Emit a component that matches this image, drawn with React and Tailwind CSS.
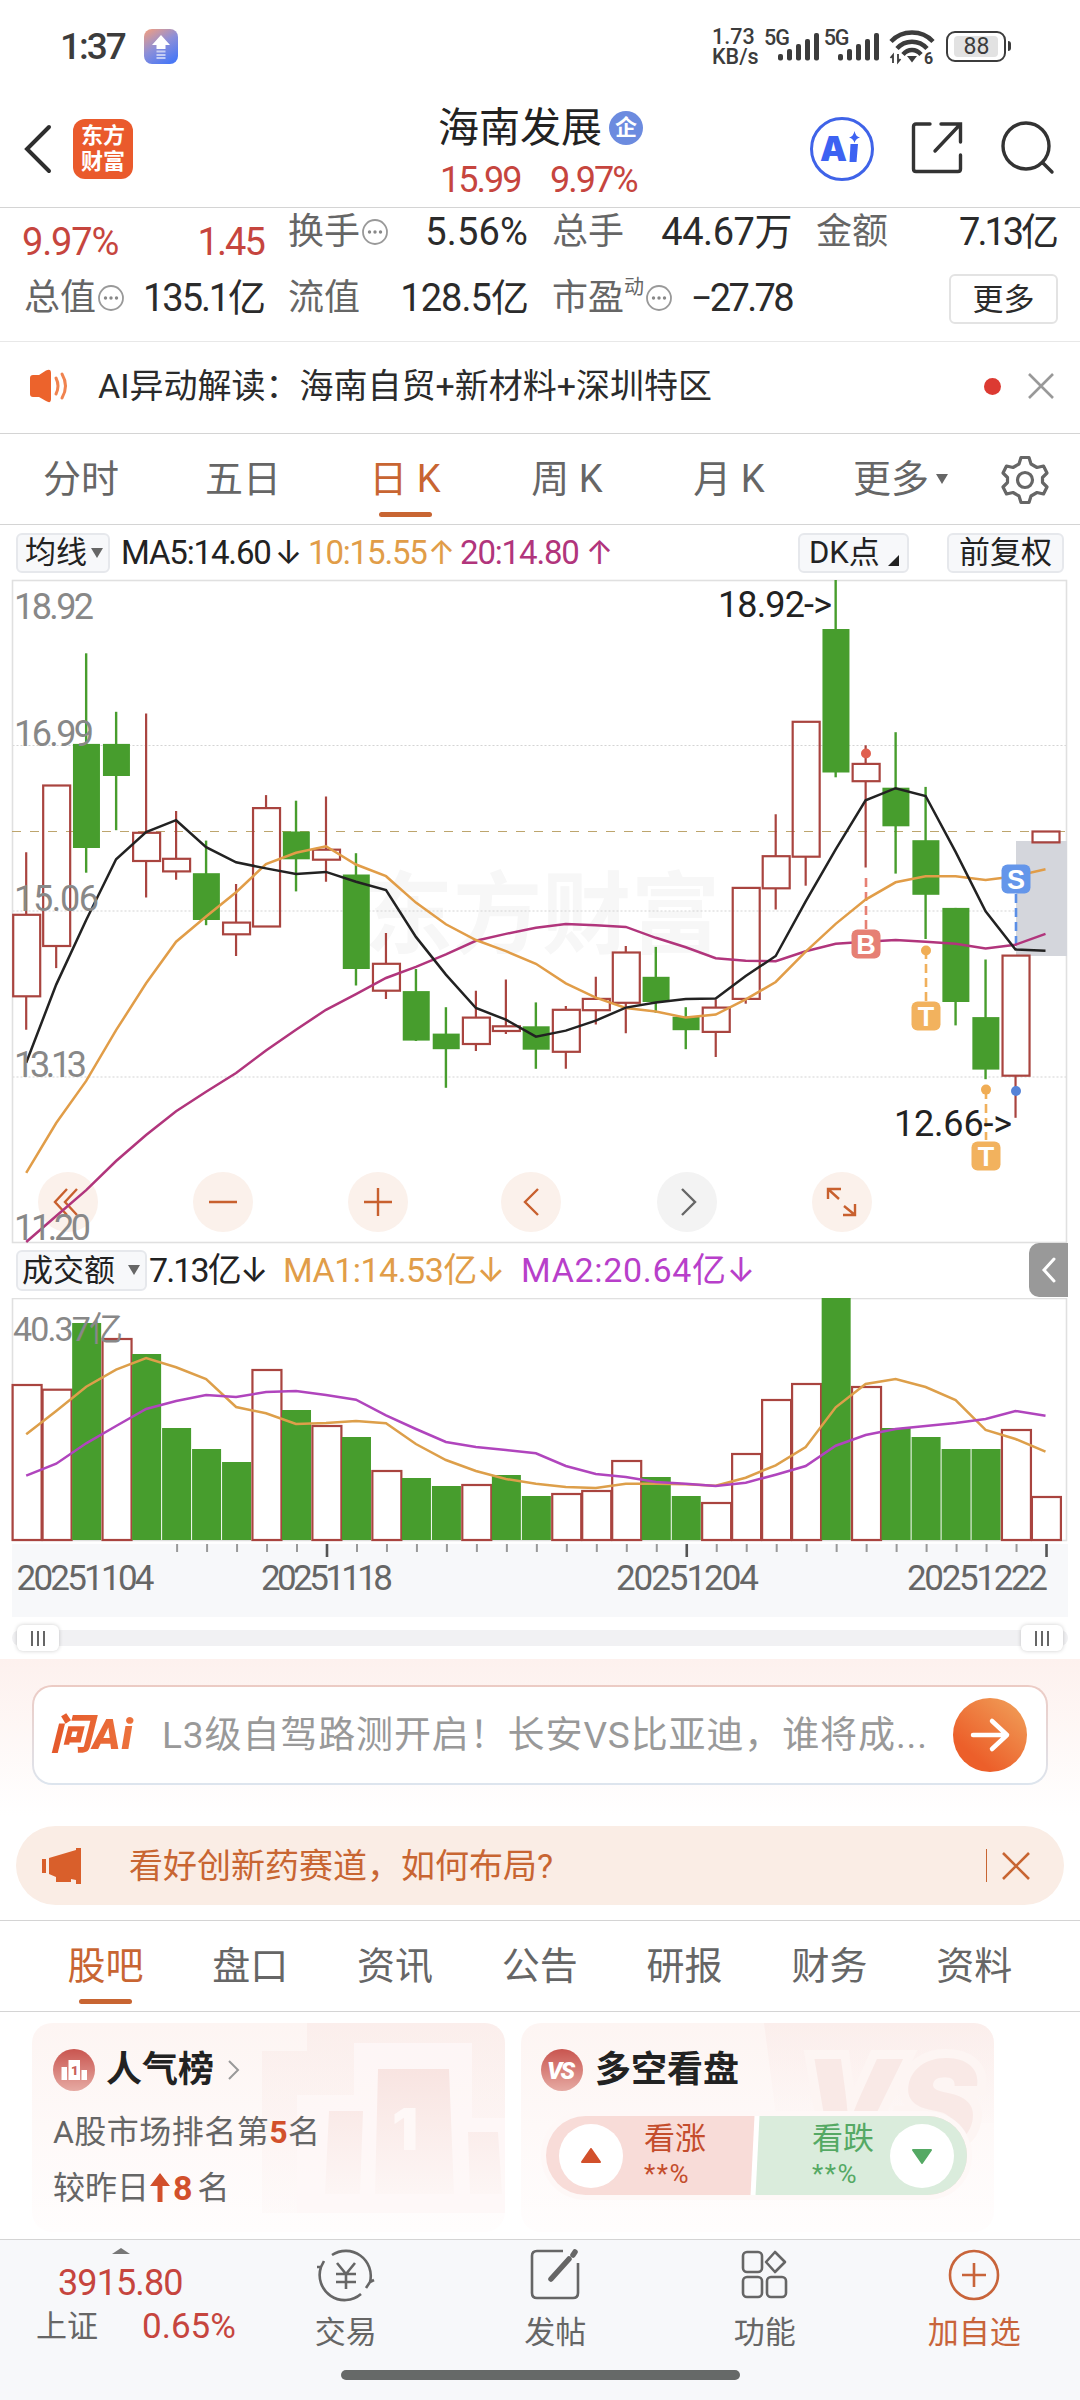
import React from "react";

const RED = "#a9443f";
const GREEN = "#479d2d";
const FONT = '"Roboto","Inter","Noto Sans CJK SC",sans-serif';

// up?, high, body top, body bottom, low
const candles = [
  [1, 272.3, 334.8, 416.3, 449.7], [1, 205.5, 205.5, 366, 388.1], [0, 73.3, 163.9, 268, 292.7],
  [0, 131.8, 163.9, 196, 250.2], [1, 133.6, 252.8, 281, 317.4], [1, 231.1, 278.8, 291.4, 299.7],
  [0, 260.6, 293.2, 340, 345.2], [1, 304, 342.6, 354.3, 376], [1, 215.1, 228.1, 346.5, 346.5],
  [0, 220.7, 251.5, 279.3, 311.4], [1, 216.4, 269.7, 279.7, 301.8], [0, 273.2, 294.5, 389, 405.5],
  [1, 353, 383.8, 410.7, 418.9], [0, 389, 411.1, 460.6, 461], [0, 427.2, 453.6, 469.2, 507.8],
  [1, 410.7, 437.6, 464, 471], [1, 399.4, 446.3, 451, 454], [0, 422.4, 446.3, 469.7, 488.8],
  [1, 425.9, 429.8, 471.8, 488.8], [1, 396.8, 418.9, 430.2, 444.5], [1, 366, 372.5, 422.8, 453.2],
  [0, 366.9, 396.8, 422, 432.8], [0, 427.2, 436.7, 450.2, 469.2], [1, 419.4, 427.6, 451.9, 477],
  [1, 307.9, 307.9, 418.9, 423.7], [1, 234.2, 276.2, 308.3, 329.6], [1, 141.8, 141.8, 276.7, 305.7],
  [0, 0, 49, 192.5, 197.3], [1, 165.2, 183.9, 201.2, 287.5], [0, 152.2, 207.7, 246.3, 293.6],
  [0, 206.9, 260.2, 314.8, 359], [0, 327.9, 327.9, 422, 445.4], [0, 379.5, 437.1, 489.6, 499.2],
  [1, 375.6, 375.6, 495.7, 537.8], [1, 251.5, 251.5, 262.4, 262.4],
];
const ma5 = [482.7, 404.6, 340, 279.3, 252, 240.2, 267.1, 282.3, 288.4, 294, 291.9, 301.8, 310.1, 356.9, 394.6, 428, 439.7, 456.7, 450.6, 440.6, 427.6, 422.4, 418.9, 418.5, 396, 376, 321.3, 269.3, 220.3, 208.2, 216, 271.9, 331.3, 369.5, 370.8];
const ma10 = [592.8, 543, 500.9, 450.2, 403.3, 361.7, 336.5, 312.2, 284, 272.8, 266.3, 284.5, 296.2, 322.6, 344.3, 360, 371.2, 383.8, 403.3, 417.6, 428, 431.5, 437.6, 434.5, 419.4, 402, 371.7, 343.9, 319.6, 302.3, 296.2, 296.2, 300.1, 296.2, 289.3];
const ma20 = [662, 636, 610.2, 581, 555, 531.3, 511.7, 493, 470.5, 449.7, 429.8, 414.2, 398, 386.8, 374.3, 360.8, 353.9, 347.8, 343.9, 345.2, 346.9, 357.8, 367.3, 378.2, 380.8, 381.2, 371.2, 363.8, 361.7, 360, 361.7, 363.8, 368.6, 364.7, 353.9];
const volumes = [87, 91.7, 25, 41, 56, 130, 151, 164, 72, 112, 128, 139, 173, 180, 188, 187, 177, 198, 196, 193, 163, 179, 198, 205, 156, 102, 86, 0, 89, 130, 139, 151, 151, 132, 199];
const volumeUp = [0, 1, 3, 8, 10, 12, 15, 18, 19, 20, 23, 24, 25, 26, 28, 33, 34];
const vma1 = [136.3, 113, 88.7, 71.7, 60, 69.3, 81, 109, 115.3, 126, 125, 123, 125.3, 146, 162, 173, 181, 185.7, 189, 190, 185.7, 185.7, 186.3, 187.7, 179.7, 167.3, 149, 109.3, 86, 81, 89, 102, 132, 141, 153.7];
const vma2 = [177.7, 165.7, 145.3, 128, 111, 103, 97, 99, 94, 93, 97, 101.7, 117.3, 131, 144, 149, 152, 155.3, 168, 176, 179, 184, 185.7, 188, 184.7, 176.7, 168, 147.7, 137, 131, 128, 125, 121, 113, 117.7];

const cx = (i) => 26.2 + i * 29.98;
const line = (a) => a.map((y, i) => `${cx(i).toFixed(1)},${y}`).join(" ");

function Badge({ x, y, fill, children }) {
  return (
    <g>
      <rect x={x - 14.5} y={y - 14.5} width="29" height="29" rx="6" fill={fill} />
      <text x={x} y={y + 9.5} textAnchor="middle" fontSize="27" fontWeight="700" fill="#fff" fontFamily='"Liberation Sans",sans-serif'>{children}</text>
    </g>
  );
}

function Candles() {
  return (
    <svg width="1080" height="663" viewBox="0 0 1080 663" className="block overflow-visible" fontFamily={FONT}>
      <text x="364" y="366" fontSize="89" fontWeight="700" fill="#f7f7f7" textLength="356">东方财富</text>
      <g stroke="#d4d4d4" strokeWidth="1.2" strokeDasharray="2 2">
        <path d="M12.5 165.5H1067M12.5 331H1067M12.5 497H1067" />
      </g>
      <rect x="12.5" y="0.5" width="1054" height="662" fill="none" stroke="#e0e0e0" strokeWidth="1.6" />
      <rect x="1016" y="261" width="51" height="115" fill="#d4d6dc" />
      <path d="M12 251.5H1067" stroke="#bda56d" strokeWidth="1.2" strokeDasharray="9 9" />
      {[68, 223, 378, 531, 687, 842].map((x) => (
        <circle key={x} cx={x} cy="622" r="30" fill={x === 687 ? "#f3f3f3" : "#fbf1eb"} />
      ))}
      <g fill="none" stroke="#c8602e" strokeWidth="2.4">
        <path d="M67 609L55 622L67 635M77 609L65 622L77 635M209 622H237M364 622H392M378 608V636M538 609L525 622L538 635" />
        <path d="M839 619L828 609M828 619V609H841M844 626L855 635M855 624V635H843" />
        <path d="M682 609L695 622L682 635" stroke="#666" />
      </g>
      {candles.map(([up, h, t, b, l], i) => {
        const x = cx(i);
        return up ? (
          <g key={i} stroke={RED} strokeWidth="2.2" fill="none">
            <path d={`M${x} ${h}V${t}M${x} ${b}V${l}`} />
            <rect x={x - 13} y={t} width="27" height={b - t} />
          </g>
        ) : (
          <g key={i} fill={GREEN}>
            <path d={`M${x} ${h}V${l}`} stroke={GREEN} strokeWidth="2.4" />
            <rect x={x - 13.2} y={t} width="27" height={b - t} />
          </g>
        );
      })}
      <g strokeWidth="2.6" strokeDasharray="9 5" fill="none">
        <path d="M866 298V350" stroke="#e68074" />
        <path d="M926 370V421M986 510V560" stroke="#f0b05c" />
        <path d="M1016 314V368" stroke="#5b8fe6" />
      </g>
      <circle cx="866" cy="173.5" r="5" fill="#e0604f" />
      <circle cx="926" cy="370.5" r="5" fill="#f0ad55" />
      <circle cx="986" cy="509.6" r="5" fill="#f0ad55" />
      <circle cx="1016" cy="511" r="5" fill="#5583d8" />
      <polyline points={line(ma20)} fill="none" stroke="#b1357c" strokeWidth="2.5" />
      <polyline points={line(ma10)} fill="none" stroke="#e19d48" strokeWidth="2.5" />
      <polyline points={line(ma5)} fill="none" stroke="#222" strokeWidth="2.5" />
      <Badge x={866} y={364} fill="#e68074">B</Badge>
      <Badge x={926} y={436} fill="#f2b25e">T</Badge>
      <Badge x={986} y={576} fill="#f2b25e">T</Badge>
      <Badge x={1016} y={299} fill="#6496ea">S</Badge>
      <g fontSize="36" fill="#888">
        <text x="14" y="38.5" textLength="80">18.92</text>
        <text x="14" y="165.5" textLength="80">16.99</text>
        <text x="14" y="331" textLength="85">15.06</text>
        <text x="14" y="497" textLength="73">13.13</text>
        <text x="14" y="660" textLength="77">11.20</text>
      </g>
      <g fontSize="36" fill="#222">
        <text x="718" y="36.5" textLength="114">18.92-&gt;</text>
        <text x="894" y="556" textLength="118">12.66-&gt;</text>
      </g>
    </svg>
  );
}

function Volume() {
  return (
    <svg width="1080" height="320" viewBox="0 0 1080 320" className="block" fontFamily={FONT}>
      <rect x="12.5" y="0.5" width="1054" height="242" fill="none" stroke="#e0e0e0" strokeWidth="1.6" />
      <rect x="12" y="246" width="1056" height="73" fill="#f7f8fa" />
      {volumes.map((t, i) => {
        const x = 12.6 + i * 29.98;
        return volumeUp.includes(i) ? (
          <rect key={i} x={x} y={t} width="29" height={242 - t} fill="none" stroke={RED} strokeWidth="2.2" />
        ) : (
          <rect key={i} x={x - 0.4} y={t} width="29" height={242 - t} fill={GREEN} />
        );
      })}
      <polyline points={line(vma1)} fill="none" stroke="#dd9f4a" strokeWidth="2.5" />
      <polyline points={line(vma2)} fill="none" stroke="#b045bd" strokeWidth="2.5" />
      {volumes.map((_, i) => {
        if (i < 5) return null;
        const major = i === 10 || i === 22 || i === 34;
        return <path key={i} d={`M${cx(i) + 1} 246V${major ? 259 : 254}`} stroke={major ? "#555" : "#999"} strokeWidth={major ? 2.6 : 2} />;
      })}
      <text x="13" y="43" fontSize="34" fill="#888" textLength="110">40.37亿</text>
      <g fontSize="35" fill="#666">
        <text x="16.5" y="292" textLength="138">20251104</text>
        <text x="261" y="292" textLength="132">20251118</text>
        <text x="616" y="292" textLength="143">20251204</text>
        <text x="907" y="292" textLength="141">20251222</text>
      </g>
    </svg>
  );
}

const Dots = () => (
  <svg width="28" height="28" viewBox="0 0 28 28" className="ml-px shrink-0">
    <circle cx="14" cy="14" r="12" fill="none" stroke="#999" strokeWidth="1.8" />
    <g fill="#888"><circle cx="8.5" cy="14" r="1.7" /><circle cx="14" cy="14" r="1.7" /><circle cx="19.5" cy="14" r="1.7" /></g>
  </svg>
);

function Stat({ label, dots, value, track }) {
  return (
    <div className="flex h-[40px] items-center justify-between text-[38px] text-[#2b2b2b]">
      <span className="flex items-center">
        <span className="text-[36px] text-[#666]">{label}</span>
        {dots && <Dots />}
      </span>
      <span className={track}>{value}</span>
    </div>
  );
}

const Signal = () => (
  <svg width="42" height="28" viewBox="0 0 42 28" className="self-end" fill="#3c3c3c">
    <rect x="0" y="21" width="5" height="6.5" rx="2" /><rect x="9" y="16" width="5" height="11.5" rx="2" />
    <rect x="18" y="11" width="5" height="16.5" rx="2" /><rect x="27" y="6" width="5" height="21.5" rx="2" />
    <rect x="36" y="0" width="5" height="27.5" rx="2" />
  </svg>
);

function StatusBar() {
  return (
    <div className="flex h-[92px] shrink-0 items-start pt-[28px] pl-[60px] text-[#3c3c3c]">
      <span className="w-[84px] text-[37px] leading-[38px] font-medium tracking-[-0.055em]">1:37</span>
      <svg width="34" height="36" viewBox="0 0 34 36" className="mt-px">
        <defs><linearGradient id="app" x1="0.1" y1="0" x2="0.7" y2="1"><stop offset="0" stopColor="#ee9d83" /><stop offset="0.5" stopColor="#8d8fd8" /><stop offset="1" stopColor="#4a78f5" /></linearGradient></defs>
        <rect width="34" height="35" rx="8" fill="url(#app)" />
        <path d="M17 6L26 16H21.5V20H12.5V16H8Z" fill="#fff" /><path d="M12.5 22.5H21.5M12.5 26H21.5M12.5 29H21.5" stroke="#fff" strokeWidth="1.8" opacity="0.6" />
      </svg>
      <div className="ml-[534px] flex h-[37px] w-[52px] flex-col justify-between text-[21.5px] leading-[17px] font-medium">
        <span>1.73</span><span>KB/s</span>
      </div>
      <div className="flex h-[33px]">
        <span className="-mr-[11px] pt-px text-[21.5px] leading-[18px] font-medium tracking-[-0.05em]">5G</span><Signal />
      </div>
      <div className="ml-[4px] flex h-[33px]">
        <span className="-mr-[10px] pt-px text-[21.5px] leading-[18px] font-medium tracking-[-0.05em]">5G</span><Signal />
      </div>
      <svg width="46" height="38" viewBox="0 0 46 38" className="ml-[9px]">
        <g fill="none" stroke="#3c3c3c" strokeWidth="4.4"><path d="M2 13.5C13 1.500 33 1.500 44 13.500" /><path d="M8 20.500C16 11.500 30 11.500 38 20.500" /><path d="M14 26.500C19 20.500 27 20.500 32 26.500" /></g>
        <path d="M18 28H28L23 34.500Z" fill="#3c3c3c" />
        <path d="M4 35V27L1.500 30M9 26V34L11.500 31" fill="none" stroke="#3c3c3c" strokeWidth="1.8" />
        <text x="35" y="35.500" fontSize="16" fontWeight="700" fill="#3c3c3c">6</text>
      </svg>
      <div className="mt-[3px] ml-[11px] flex h-[31px] w-[60px] items-center justify-center rounded-[9px] border-[2.500px] border-[#3c3c3c] p-[3px]">
        <span className="flex h-full w-[44px] items-center justify-center rounded-[4px] bg-[#e2e2e2] text-[23px]">88</span>
      </div>
      <span className="mt-[13px] ml-[2px] h-[10px] w-[3px] rounded-r bg-[#3c3c3c]" />
    </div>
  );
}

function Header() {
  return (
    <div className="flex h-[116px] shrink-0 items-center border-b border-[#d4d4d4] pb-[3px]">
      <svg width="30" height="52" viewBox="0 0 30 52" className="mt-[2px] ml-[23px]"><path d="M26 4L4 26L26 48" fill="none" stroke="#2e2e2e" strokeWidth="4" strokeLinecap="round" /></svg>
      <div className="mt-[2px] ml-[20px] flex h-[60px] w-[60px] flex-col items-center justify-center rounded-[12px] bg-[#ea5a2c] text-[22px] leading-[26px] font-bold text-white">
        <span>东方</span><span>财富</span>
      </div>
      <div className="mt-[10px] ml-[305px] flex w-[251px] flex-col">
        <div className="flex h-[44px] items-center text-[41px] leading-[44px] text-[#222]">
          海南发展
          <span className="ml-[7px] flex h-[34px] w-[34px] items-center justify-center rounded-full bg-[#6c8bdf] text-[22px] leading-none font-bold text-white">企</span>
        </div>
        <div className="mt-[10px] flex h-[40px] items-center text-[36px] tracking-[-0.055em] text-[#c6453e]">
          <span className="w-[112px] pl-[2px]">15.99</span><span>9.97%</span>
        </div>
      </div>
      <svg width="66" height="66" viewBox="0 0 66 66" className="mt-[2px] ml-[120px]">
        <circle cx="33" cy="33" r="30.500" fill="none" stroke="#3f63e8" strokeWidth="3" />
        <text x="11" y="45" fontSize="34" fontWeight="900" fill="#3d62f2" fontFamily="Inter" textLength="26">A</text>
        <path d="M41.500 28H49L47.500 46H40.500Z" fill="#3d62f2" /><path d="M45.500 15Q46.500 20.500 51 21.500Q46.500 22.500 45.500 27Q44.500 22.500 40 21.500Q44.500 20.500 45.500 15Z" fill="#3d62f2" />
      </svg>
      <svg width="54" height="56" viewBox="0 0 54 56" className="ml-[36px]" fill="none" stroke="#333" strokeWidth="3.400" strokeLinecap="round">
        <path d="M19 4H5Q2.500 4 2.500 6.500V49Q2.500 51.500 5 51.500H47Q49.500 51.500 49.500 49V35M30 4H49.500V22M49.500 4L24 31" />
      </svg>
      <svg width="54" height="56" viewBox="0 0 54 56" className="ml-[36px]" fill="none" stroke="#333" strokeWidth="3.400" strokeLinecap="round">
        <circle cx="25" cy="26" r="23" /><path d="M42 43L51 52" />
      </svg>
    </div>
  );
}

const Caret = () => <span className="h-0 w-0 border-x-[6px] border-t-[10px] border-x-transparent border-t-[#666]" />;

function Tabs({ items, active, width }) {
  return items.map((t, i) => (
    <div key={t} className={"flex flex-col items-center " + width + (i === active ? " text-[#c86532]" : " text-[#666]")}>
      <span className="text-[38px] leading-[44px] tracking-normal whitespace-pre">{t}</span>
      <span className={"mt-[11px] h-[5px] w-[53px] rounded-full " + (i === active ? "bg-[#c86532]" : "")} />
    </div>
  ));
}

function NavItem({ label, accent, children }) {
  return (
    <div className={"flex w-[209.5px] flex-col items-center pt-[7px] " + (accent ? "text-[#c8643a]" : "text-[#666]")}>
      <svg width="60" height="56" viewBox="0 0 60 56" fill="none" stroke="currentColor" strokeWidth="2.600">{children}</svg>
      <span className="mt-[12px] text-[31px] leading-[36px]">{label}</span>
    </div>
  );
}

export default function App() {
  return (
    <div className="flex h-[2400px] w-[1080px] flex-col overflow-hidden bg-white leading-none" style={{ fontFamily: FONT }}>
      <StatusBar />
      <Header />

      <div className="grid h-[134px] shrink-0 grid-cols-4 content-start gap-x-6 gap-y-[26px] border-b border-[#e8e8e8] px-6 pt-[4px]">
        <div className="flex h-[40px] translate-y-[10px] items-center justify-between text-[38px] text-[#c6453e]"><span className="-ml-[2px] tracking-[-0.03em]">9.97%</span><span className="tracking-[-0.05em]">1.45</span></div>
        <Stat label="换手" dots value="5.56%" track="tracking-[0.005em]" />
        <Stat label="总手" value="44.67万" track="tracking-[-0.012em]" />
        <Stat label="金额" value="7.13亿" track="tracking-[-0.08em]" />
        <Stat label="总值" dots value="135.1亿" track="tracking-[-0.055em]" />
        <Stat label="流值" value="128.5亿" track="tracking-[-0.025em]" />
        <Stat label={<>市盈<sup className="relative -top-[16px] align-baseline text-[20px]">动</sup></>} dots value="−27.78" track="tracking-[-0.07em]" />
        <div className="-mt-[4px] -mr-[2px] ml-auto flex h-[50px] w-[109px] items-center justify-center rounded-[6px] border-2 border-[#e3e3e3] text-[31px] text-[#2b2b2b]">更多</div>
      </div>

      <div className="flex h-[92px] shrink-0 items-center border-b border-[#d4d4d4] pb-[3px]">
        <svg width="42" height="34" viewBox="0 0 42 34" className="ml-[29px]"><path d="M1 9Q1 6 4 6H10L17 1.500Q22 -1 22 4V30Q22 35 17 32L10 28H4Q1 28 1 25Z" fill="#ec632c" /><path d="M27 9Q31 17 27 25M33 5Q40 17 33 29" fill="none" stroke="#f0834f" strokeWidth="3" strokeLinecap="round" /></svg>
        <span className="ml-[27px] text-[34px] text-[#2b2b2b]">AI异动解读：海南自贸+新材料+深圳特区</span>
        <span className="ml-auto h-[17px] w-[17px] rounded-full bg-[#dc3a32]" />
        <svg width="28" height="28" viewBox="0 0 28 28" className="mr-[25px] ml-[26px]"><path d="M2 2L26 26M26 2L2 26" stroke="#999" strokeWidth="2.600" /></svg>
      </div>

      <div className="flex h-[91px] shrink-0 items-start border-b border-[#d4d4d4] pt-[23px]">
        <Tabs items={["分时", "五日", "日 K", "周 K", "月 K"]} active={2} width="w-[162px]" />
        <div className="ml-[43px] flex h-[44px] items-center gap-[7px] text-[38px] text-[#666]">更多<Caret /></div>
        <svg width="48" height="50" viewBox="0 0 48 50" className="-mt-[2px] ml-[53px]" fill="none" stroke="#666" strokeWidth="3.200" strokeLinejoin="round">
          <path d="M20 2.500H28L30 9L36 12.500L42.500 11L46 18L41.500 22.500V27.500L46 32L42.500 39L36 37.500L30 41L28 47.500H20L18 41L12 37.500L5.500 39L2 32L6.500 27.500V22.500L2 18L5.500 11L12 12.500L18 9Z" /><circle cx="24" cy="25" r="7.500" />
        </svg>
      </div>

      <div className="flex h-[55px] shrink-0 items-center px-4 text-[33px] tracking-[-0.035em]">
        <div className="flex h-[40px] w-[94px] items-center gap-[4px] rounded-[6px] border-2 border-[#e6e8ec] bg-[#f7f8fa] pl-[7px] text-[31px] tracking-normal text-[#222]">均线<Caret /></div>
        <span className="ml-[11px] flex w-[187px] justify-between pr-[7px] whitespace-nowrap text-[#222]">MA5:14.60<span>↓</span></span>
        <span className="flex w-[152px] justify-between pr-[6px] whitespace-nowrap text-[#e19d48]">10:15.55<span>↑</span></span>
        <span className="flex w-[152px] justify-between whitespace-nowrap text-[#b1357c]">20:14.80<span>↑</span></span>
        <div className="ml-auto flex h-[40px] w-[111px] items-center rounded-[6px] border-2 border-[#e6e8ec] bg-[#f7f8fa] pl-[9px] text-[31px] tracking-normal text-[#222]">DK点<span className="mt-[16px] ml-[8px] h-0 w-0 border-b-[11px] border-l-[11px] border-b-[#222] border-l-transparent" /></div>
        <div className="ml-[38px] flex h-[40px] w-[117px] items-center justify-center rounded-[6px] border-2 border-[#e6e8ec] bg-[#f7f8fa] text-[31px] tracking-normal text-[#222]">前复权</div>
      </div>

      <div className="h-[662px] shrink-0"><Candles /></div>

      <div className="flex h-[56px] shrink-0 items-center pl-4 text-[34px]">
        <div className="flex h-[41px] w-[131px] items-center gap-[13px] rounded-[6px] border-2 border-[#e6e8ec] bg-[#f7f8fa] pl-[4px] text-[31px] text-[#222]">成交额<Caret /></div>
        <span className="ml-[2px] w-[134px] tracking-[-0.055em] whitespace-nowrap text-[#222]">7.13亿↓</span>
        <span className="w-[238px] tracking-[-0.015em] whitespace-nowrap text-[#e19d48]">MA1:14.53亿↓</span>
        <span className="tracking-[0.02em] whitespace-nowrap text-[#b83fca]">MA2:20.64亿↓</span>
        <div className="mr-[12px] ml-auto flex h-[54px] w-[39px] items-center justify-center rounded-l-[10px] bg-[#999]">
          <svg width="16" height="26" viewBox="0 0 16 26"><path d="M13 2L3 13L13 24" fill="none" stroke="#fff" strokeWidth="3" strokeLinecap="round" /></svg>
        </div>
      </div>

      <div className="h-[320px] shrink-0"><Volume /></div>

      <div className="flex h-[41px] shrink-0 items-center px-3 pb-[1px]">
        <div className="flex h-[16px] w-full items-center justify-between rounded-full bg-[#f1f1f3] px-[5px]">
          {[0, 1].map((k) => (
            <div key={k} className="flex h-[26px] w-[42px] items-center justify-center gap-[4px] rounded-[6px] bg-white shadow-[0_0_4px_rgba(0,0,0,0.2)]">
              <i className="h-[15px] w-[2px] bg-[#666]" /><i className="h-[15px] w-[2px] bg-[#666]" /><i className="h-[15px] w-[2px] bg-[#666]" />
            </div>
          ))}
        </div>
      </div>

      <div className="h-[262px] shrink-0 border-b border-[#d4d4d4] bg-linear-to-b from-[#fdf1ee] via-white via-60% to-white pt-[26px]">
        <div className="mx-8 h-[100px] rounded-[20px] bg-linear-to-b from-[#eccbc4] to-[#dde5ee] p-[2px]">
          <div className="flex h-full items-center rounded-[18px] bg-white pl-[16px]">
            <span className="w-[112px] bg-linear-to-r from-[#e4582a] to-[#ef7a42] bg-clip-text text-[42px] leading-[50px] font-black tracking-[0.02em] whitespace-nowrap text-transparent italic">问Ai</span>
            <span className="w-[775px] text-[37px] tracking-[0.024em] whitespace-nowrap text-[#999]">L3级自驾路测开启！长安VS比亚迪，谁将成...</span>
            <svg width="76" height="76" viewBox="0 0 76 76" className="mr-[18px] ml-auto">
              <defs><linearGradient id="go" x1="0.9" y1="0.1" x2="0.3" y2="0.8"><stop offset="0" stopColor="#f09a55" /><stop offset="1" stopColor="#ec5f2a" /></linearGradient></defs>
              <circle cx="38" cy="38" r="37" fill="url(#go)" /><path d="M21 38H55M40 24L55 38L40 52" fill="none" stroke="#fff" strokeWidth="4.500" strokeLinecap="round" strokeLinejoin="round" />
            </svg>
          </div>
        </div>
        <div className="mx-4 mt-[41px] flex h-[79px] items-center rounded-[40px] bg-[#faede5] pl-[26px] text-[#c86532]">
          <svg width="42" height="36" viewBox="0 0 42 36" fill="#d95f2b"><path d="M0 11H4V25H0Z M7 10L34 2V0H39V36H34V32L29 31V34H14V29L7 26Z" /></svg>
          <span className="ml-[45px] text-[34px]">看好创新药赛道，如何布局?</span>
          <span className="mr-[14px] ml-auto h-[33px] w-px bg-[#c86532]" />
          <svg width="30" height="30" viewBox="0 0 30 30" className="mr-[33px]"><path d="M2 2L28 28M28 2L2 28" stroke="#c86532" strokeWidth="2.600" /></svg>
        </div>
      </div>

      <div className="flex h-[91px] shrink-0 items-start border-b border-[#d4d4d4] pt-[23px] pl-[33px]">
        <Tabs items={["股吧", "盘口", "资讯", "公告", "研报", "财务", "资料"]} active={0} width="w-[144.8px]" />
      </div>

      <div className="flex h-[227px] shrink-0 gap-4 px-8 pt-[11px]">
        <div className="relative h-[209px] w-[473px] overflow-hidden rounded-[20px] bg-linear-to-b from-[#fdf5f3] to-[#fffdfd] pt-[26px] pl-[21px]">
          <svg width="473" height="209" viewBox="0 0 473 209" className="absolute top-0 left-0">
            <defs><linearGradient id="pod" x1="0" y1="0" x2="0" y2="1"><stop offset="0" stopColor="#f8e4e1" /><stop offset="1" stopColor="#fdf6f5" /></linearGradient></defs>
            <path d="M230 28H275V0H473V190H230Z" fill="url(#pod)" opacity="0.4" />
            <path d="M265 72H322V20H440V95H473V190H265Z" fill="#fef8f7" opacity="0.8" />
            <path d="M297 88H331L328 171H293ZM346 46H417L422 171H343ZM436 109H466L470 171H438Z" fill="url(#pod)" />
            <text x="360" y="127" fontSize="58" fontWeight="900" fill="#fef8f7" fontFamily="Inter">1</text>
          </svg>
          <div className="relative flex h-[42px] items-center text-[36px] font-bold text-[#222]">
            <svg width="42" height="42" viewBox="0 0 42 42" className="mr-[11px]"><defs><linearGradient id="ic" x1="0" y1="0" x2="0" y2="1"><stop offset="0" stopColor="#c9554f" /><stop offset="1" stopColor="#e6aaa3" /></linearGradient></defs><circle cx="21" cy="21" r="21" fill="url(#ic)" /><path d="M8.500 18H14V31H8.500ZM15.500 11H27V31H15.500ZM28.500 21H34V31H28.500Z" fill="#fff" /><text x="18" y="25.500" fontSize="13" fontWeight="900" fill="#c9605a">1</text></svg>
            人气榜
            <svg width="14" height="22" viewBox="0 0 14 22" className="ml-[13px]"><path d="M2 2L11 11L2 20" fill="none" stroke="#999" strokeWidth="2" /></svg>
          </div>
          <div className="relative mt-[21px] flex h-[40px] items-center text-[32px] tracking-[0.015em] text-[#666]">A股市场排名第<b className="text-[#d2502b]">5</b>名</div>
          <div className="relative mt-[16px] flex h-[40px] items-center text-[32px] text-[#666]">较昨日<svg width="22" height="30" viewBox="0 0 22 30" className="mr-[2px]"><path d="M11 0L21 13H13.500V29H8.500V13H1Z" fill="#d2502b" /></svg><b className="mr-[5px] text-[34px] text-[#d2502b]">8</b>名</div>
        </div>
        <div className="relative h-[209px] w-[473px] overflow-hidden rounded-[20px] bg-linear-to-b from-[#fdf5f3] to-[#fffdfd] pt-[26px] pl-[20px]">
          <svg width="473" height="209" viewBox="0 0 473 209" className="absolute top-0 left-0">
            <path d="M243 0H473V100H256Z" fill="url(#pod)" opacity="0.4" />
            <text x="282" y="122" fontSize="118" fontWeight="900" fontStyle="italic" fill="#f9e9e6" stroke="#fdf5f3" strokeWidth="18" paintOrder="stroke" fontFamily="Inter" textLength="174">VS</text>
          </svg>
          <div className="relative flex h-[42px] items-center text-[36px] font-bold text-[#222]">
            <svg width="42" height="42" viewBox="0 0 42 42" className="mr-[12px]"><circle cx="21" cy="21" r="21" fill="url(#ic)" /><text x="6" y="30" fontSize="24" fontWeight="900" fontStyle="italic" fill="#fff" textLength="28">VS</text></svg>
            多空看盘
          </div>
          <div className="relative mt-[20px] flex h-[89px] w-[431px] overflow-hidden rounded-full border-[5px] border-white/80 bg-[#f8dcd8]">
            <svg width="421" height="80" viewBox="0 0 421 80" className="absolute top-0 left-0"><path d="M212 0H421V80H208Z" fill="#daecdc" /><path d="M211 0L207 80" stroke="#fff" strokeWidth="5" /></svg>
            <div className="relative flex w-full items-center px-[13px]">
              <span className="flex h-[64px] w-[64px] items-center justify-center rounded-full bg-white"><svg width="20" height="16" viewBox="0 0 20 16"><path d="M10 1L19 14H1Z" fill="#d2502b" stroke="#d2502b" strokeLinejoin="round" strokeWidth="2" /></svg></span>
              <div className="ml-[21px] flex flex-col pb-[3px] text-[#c44d2c]"><span className="text-[31px] leading-[40px]">看涨</span><span className="text-[26px] leading-[30px] tracking-[0.06em]">**%</span></div>
              <div className="ml-auto flex flex-col pb-[3px] text-[#55a964]"><span className="text-[31px] leading-[40px]">看跌</span><span className="text-[26px] leading-[30px] tracking-[0.06em]">**%</span></div>
              <span className="ml-[16px] flex h-[64px] w-[64px] items-center justify-center rounded-full bg-white"><svg width="20" height="16" viewBox="0 0 20 16"><path d="M10 15L19 2H1Z" fill="#55a964" stroke="#55a964" strokeLinejoin="round" strokeWidth="2" /></svg></span>
            </div>
          </div>
        </div>
      </div>

      <div className="h-[161px] shrink-0 border-t border-[#d4d4d4] bg-[#f7f8fa]">
        <div className="flex h-[129px]">
          <div className="w-[241px] shrink-0">
            <div className="mt-[8px] ml-[112px] h-0 w-0 border-x-[9px] border-b-[6px] border-x-transparent border-b-[#777]" />
            <div className="mt-[10px] flex h-[38px] items-center pl-[58px] text-[36px] tracking-[-0.025em] text-[#c6453e]">3915.80</div>
            <div className="mt-[5px] flex h-[38px] items-center pl-[36px] text-[31px] text-[#666]">上证<span className="ml-[44px] text-[35px] text-[#c6453e]">0.65%</span></div>
          </div>
          <NavItem label="交易">
            <path d="M16 8A25 25 0 0 1 54 35L50 41M54 35L58 33M45 47A25 25 0 0 1 5 20L8 14M5 20L1 20" />
            <path d="M21 16L30 27L39 16M20 27H40M20 35H40M30 27V42" />
          </NavItem>
          <NavItem label="发帖">
            <path d="M38 4H12Q7 4 7 9V46Q7 51 12 51H48Q53 51 53 46V16" /><path d="M26 32L44 12M48 8L50 5" strokeWidth="5.500" strokeLinecap="round" />
          </NavItem>
          <NavItem label="功能">
            <rect x="8" y="5" width="19" height="20" rx="4" /><path d="M40 5L50 15L40 25L31 15Z" strokeLinejoin="round" /><rect x="8" y="30" width="19" height="20" rx="4" /><rect x="32" y="30" width="19" height="20" rx="4" />
          </NavItem>
          <NavItem label="加自选" accent>
            <circle cx="30" cy="28" r="24" /><path d="M18 28H42M30 16V40" />
          </NavItem>
        </div>
        <div className="mx-auto mt-px h-[10px] w-[399px] rounded-full bg-[#666968]" />
      </div>
    </div>
  );
}
